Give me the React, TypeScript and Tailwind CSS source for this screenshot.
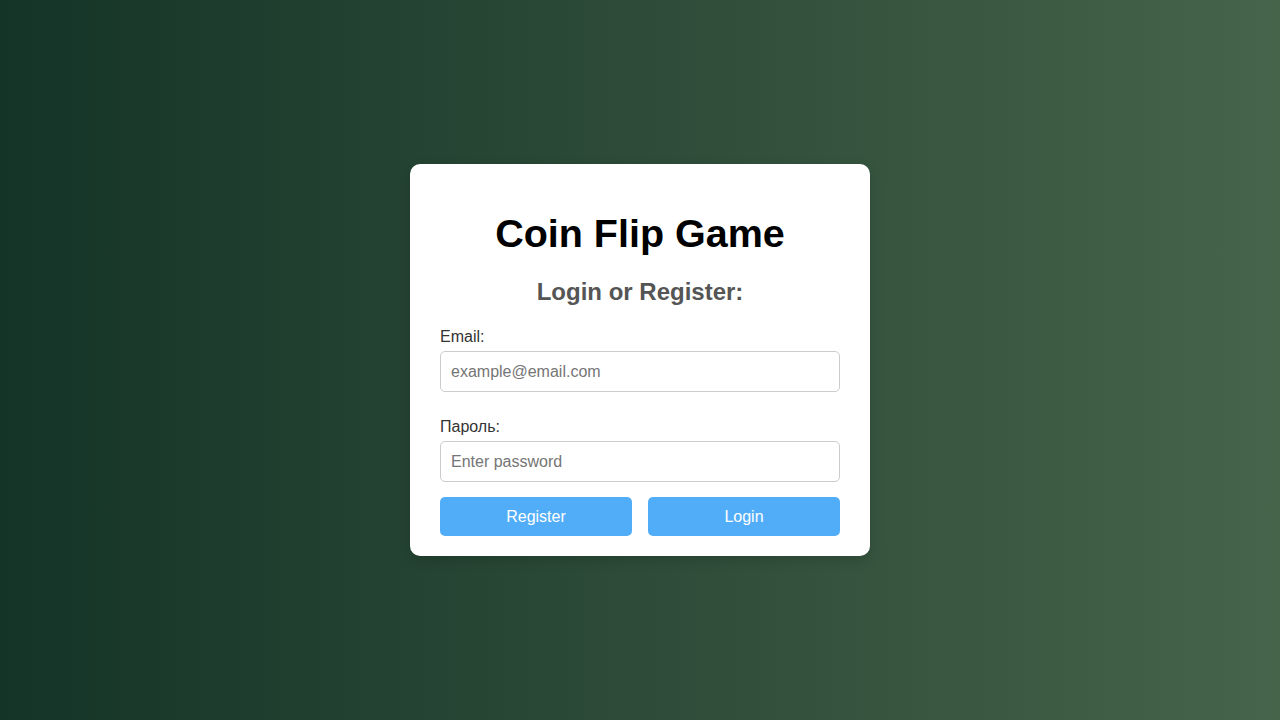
export default function App() {
  return (
    <div className="flex h-screen w-full items-center justify-center bg-gradient-to-r from-[#143427] to-[#46644a] font-['Liberation_Sans',Arial,sans-serif]">
      <div className="w-[460px] rounded-[10px] bg-white px-[30px] pb-[20px] pt-[46px] shadow-[0_4px_12px_rgba(0,0,0,0.15)]">
        <h1 className="text-center text-[39.5px] font-bold leading-[46px] text-black">
          Coin Flip Game
        </h1>
        <h2 className="mt-[22px] text-center text-[24px] font-bold leading-[28px] text-[#555]">
          Login or Register:
        </h2>

        <label className="mt-[22px] block text-[16px] leading-[18px] text-[#333]">
          Email:
        </label>
        <input
          type="email"
          placeholder="example@email.com"
          className="mt-[5px] block h-[41px] w-full rounded-[5px] border border-[#ccc] px-[10px] text-[16px] text-[#333] outline-none placeholder:text-[#757575]"
        />

        <label className="mt-[26px] block text-[16px] leading-[18px] text-[#333]">
          Пароль:
        </label>
        <input
          type="password"
          placeholder="Enter password"
          className="mt-[5px] block h-[41px] w-full rounded-[5px] border border-[#ccc] px-[10px] text-[16px] text-[#333] outline-none placeholder:text-[#757575]"
        />

        <div className="mt-[15px] flex gap-[16px]">
          <button
            type="button"
            className="h-[39px] flex-1 rounded-[5px] bg-[#52adf9] text-[16px] text-white"
          >
            Register
          </button>
          <button
            type="button"
            className="h-[39px] flex-1 rounded-[5px] bg-[#52adf9] text-[16px] text-white"
          >
            Login
          </button>
        </div>
      </div>
    </div>
  );
}
